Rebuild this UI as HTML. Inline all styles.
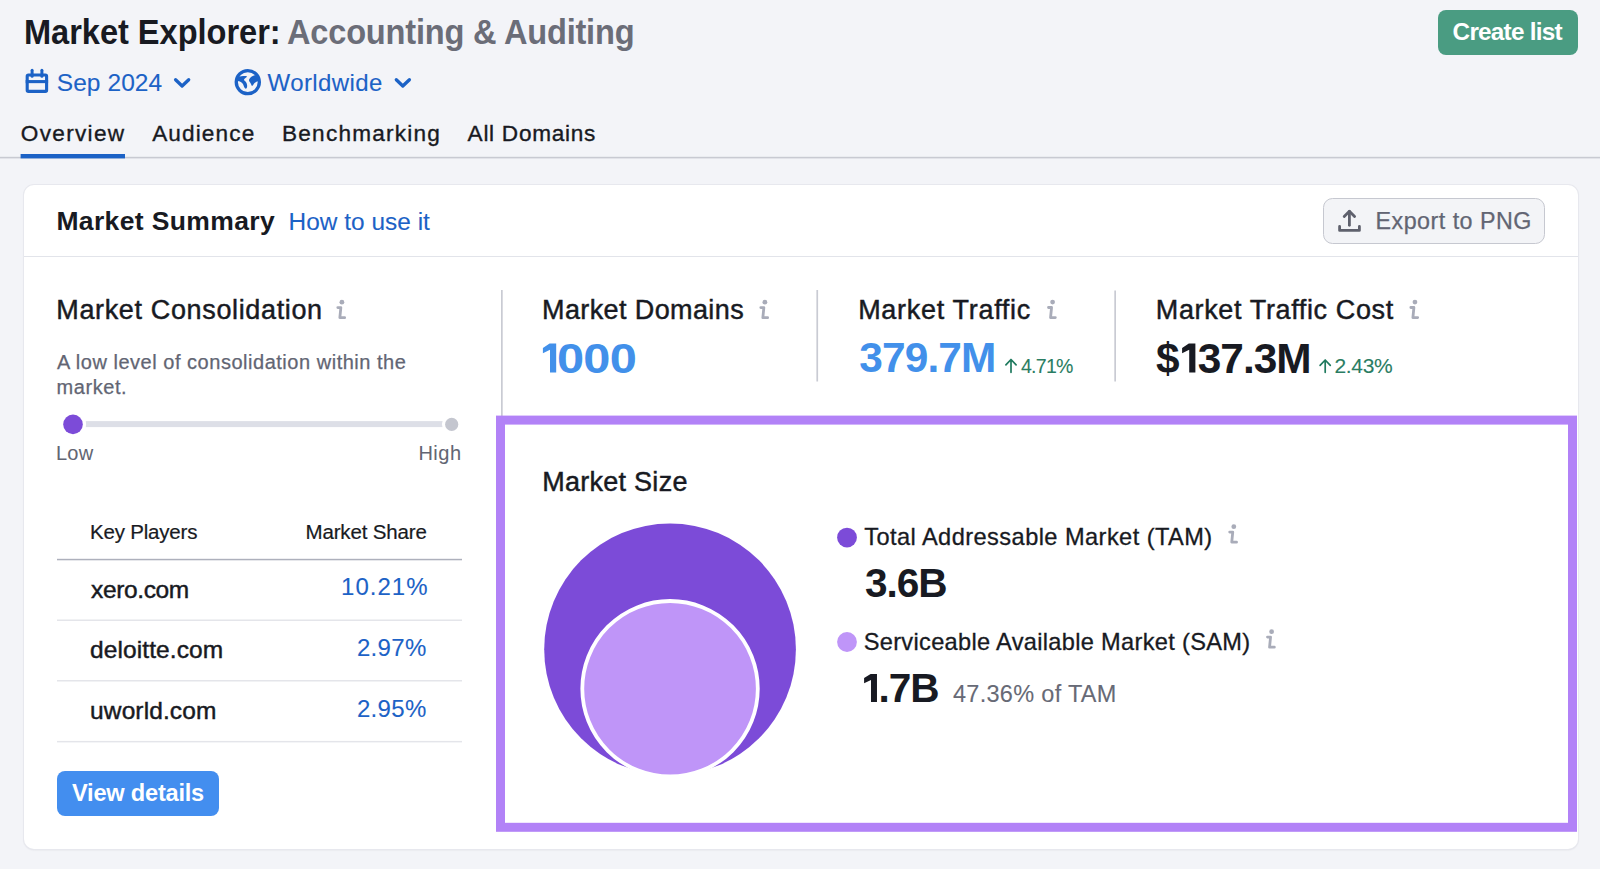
<!DOCTYPE html>
<html><head><meta charset="utf-8">
<style>
html,body{margin:0;padding:0;}
body{width:1600px;height:869px;background:#f3f4f8;position:relative;overflow:hidden;font-family:"Liberation Sans",sans-serif;}
.t{position:absolute;white-space:nowrap;line-height:1;font-family:"Liberation Sans",sans-serif;}
.a{position:absolute;}
svg{position:absolute;overflow:visible;}
</style></head><body>
<!-- top bar -->
<div class="a" style="left:1438px;top:9.5px;width:140px;height:45.5px;border-radius:8px;background:#4a9c82;"></div>
<svg style="left:0;top:0" width="1600" height="160" viewBox="0 0 1600 160">
  <!-- calendar -->
  <g fill="none" stroke="#1c62c6" stroke-width="3.1">
    <rect x="27.2" y="74.95" width="19.4" height="16.44" rx="1.2"/>
    <line x1="25.7" y1="81.6" x2="48.1" y2="81.6"/>
  </g>
  <g stroke="#1c62c6" stroke-width="3" stroke-linecap="round">
    <line x1="32.1" y1="70.3" x2="32.1" y2="76.3"/>
    <line x1="41.9" y1="70.3" x2="41.9" y2="76.3"/>
  </g>
  <!-- chevrons -->
  <path d="M175.6,79.7 L182.1,86 L188.7,79.7" fill="none" stroke="#1c62c6" stroke-width="3.3" stroke-linecap="round" stroke-linejoin="round"/>
  <path d="M396.3,79.7 L402.8,86 L409.4,79.7" fill="none" stroke="#1c62c6" stroke-width="3.3" stroke-linecap="round" stroke-linejoin="round"/>
  <!-- globe -->
  <g transform="translate(230,65) scale(0.04028)">
    <circle cx="442" cy="425" r="287" fill="none" stroke="#1c62c6" stroke-width="82"/>
    <path fill="#1c62c6" d="M175,300 C230,285 330,270 400,272 L425,292 C390,315 355,340 345,375 C380,405 420,440 425,500 C428,545 420,580 395,588 C360,585 345,530 325,480 C300,430 250,405 180,400 Z"/>
    <path fill="#1c62c6" d="M625,250 C565,270 505,305 480,345 C465,375 470,405 495,430 C520,460 530,500 545,522 C575,505 585,470 610,445 C640,420 670,405 705,395 L690,300 Z"/>
  </g>
  <!-- tabs line -->
  <rect x="0" y="156.8" width="1600" height="1.6" fill="#c8cad2"/>
  <rect x="20.6" y="154" width="104.4" height="4.4" fill="#1c62c6"/>
</svg>

<!-- card -->
<div class="a" style="left:24px;top:185px;width:1554px;height:664px;background:#fff;border-radius:10px;box-shadow:0 0 0 1px #e7e8ee,0 1px 2px rgba(30,30,50,0.12);"></div>
<div class="a" style="left:24px;top:255.5px;width:1554px;height:1.3px;background:#e2e4ea;"></div>
<!-- export button -->
<div class="a" style="left:1323.3px;top:197.9px;width:221.9px;height:45.8px;box-sizing:border-box;border:1.9px solid #c6c8d0;border-radius:9.5px;background:#f3f4f7;"></div>
<svg style="left:0;top:0" width="1600" height="869" viewBox="0 0 1600 869">
  <!-- upload icon -->
  <g fill="none" stroke="#5f616d" stroke-width="2.8" stroke-linecap="round" stroke-linejoin="round">
    <path d="M1349.4,211.5 V225.3"/>
    <path d="M1344.2,216.6 L1349.4,211.3 L1354.6,216.6"/>
    <path d="M1339.6,226.5 V230.4 H1359.4 V226.5"/>
  </g>
  <!-- dividers -->
  <rect x="501" y="290" width="1.7" height="126" fill="#c9cbd3"/>
  <rect x="816.4" y="290" width="1.7" height="91.5" fill="#c9cbd3"/>
  <rect x="1114.3" y="290.5" width="1.7" height="91" fill="#c9cbd3"/>
  <!-- slider -->
  <rect x="80" y="421.1" width="370" height="6" fill="#dddfe7"/>
  <circle cx="73" cy="424.1" r="13.1" fill="#fff"/>
  <circle cx="451.7" cy="424.1" r="9.8" fill="#fff"/>
  <circle cx="451.7" cy="424.4" r="6.6" fill="#c4c6cf"/>
  <circle cx="73" cy="424.4" r="9.8" fill="#7c4bd8"/>
  <!-- table lines -->
  <rect x="57" y="558.8" width="405" height="1.5" fill="#adb0bc"/>
  <rect x="57" y="619.5" width="405" height="1.5" fill="#e4e5ea"/>
  <rect x="57" y="680" width="405" height="1.5" fill="#e4e5ea"/>
  <rect x="57" y="740.9" width="405" height="1.5" fill="#e4e5ea"/>
  <!-- purple box -->
  <rect x="500.5" y="420.1" width="1072" height="407.2" fill="none" stroke="#b282f7" stroke-width="9"/>
  <!-- circles -->
  <circle cx="670.05" cy="649.35" r="125.85" fill="#7c4bd8"/>
  <circle cx="670.05" cy="688.75" r="87.75" fill="#bf95f8" stroke="#fff" stroke-width="3.8"/>
  <!-- legend dots -->
  <circle cx="847" cy="537.6" r="9.9" fill="#7c4bd8"/>
  <circle cx="847" cy="642" r="9.9" fill="#bf95f8"/>
  <!-- green arrows -->
  <g fill="none" stroke="#1f7a5e" stroke-width="1.7" stroke-linecap="round" stroke-linejoin="round">
    <path d="M1011,359.8 V372.3 M1005.9,364.9 L1011,359.5 L1016.1,364.9"/>
    <path d="M1325.2,360.3 V372.3 M1320.1,365.3 L1325.2,360 L1330.3,365.3"/>
  </g>
  <!-- info icons -->
  <defs>
    <g id="info">
      <circle cx="0" cy="0" r="2.4" fill="#a9acb9"/>
      <path d="M-4.1,5.4 H-1.05 L-2.05,15.5 H2.75" fill="none" stroke="#a9acb9" stroke-width="2.8" stroke-linecap="round" stroke-linejoin="round"/>
    </g>
  </defs>
  <use href="#info" x="341.9" y="302.2"/>
  <use href="#info" x="764.9" y="302.2"/>
  <use href="#info" x="1052.6" y="302.1"/>
  <use href="#info" x="1414.95" y="302.1"/>
  <use href="#info" x="1233.8" y="526.7"/>
  <use href="#info" x="1271.6" y="631.7"/>
</svg>
<!-- view details -->
<div class="a" style="left:57px;top:770.8px;width:161.8px;height:44.8px;border-radius:8px;background:#438eef;"></div>
<div class="t" id="t1" style="left:23.85px;top:14.60px;font-size:34.3px;font-weight:700;color:#181a22;letter-spacing:-0.032px;-webkit-text-stroke:0px #181a22;transform-origin:0 0;transform:scaleX(0.95)">Market Explorer:</div>
<div class="t" id="t2" style="left:287.05px;top:14.60px;font-size:34.3px;font-weight:700;color:#6b6d78;letter-spacing:-0.218px;-webkit-text-stroke:0px #6b6d78;transform-origin:0 0;transform:scaleX(0.95)">Accounting &amp; Auditing</div>
<div class="t" id="cl" style="left:1452.60px;top:19.80px;font-size:24.3px;font-weight:700;color:#fff;letter-spacing:-0.760px;-webkit-text-stroke:0px #fff;transform-origin:0 0;transform:scaleX(1.0)">Create list</div>
<div class="t" id="sep" style="left:56.75px;top:70.60px;font-size:24.5px;font-weight:400;color:#1c62c6;letter-spacing:0.071px;-webkit-text-stroke:0.1px #1c62c6;transform-origin:0 0;transform:scaleX(1.0)">Sep 2024</div>
<div class="t" id="ww" style="left:267.50px;top:70.60px;font-size:24px;font-weight:400;color:#1c62c6;letter-spacing:0.413px;-webkit-text-stroke:0.1px #1c62c6;transform-origin:0 0;transform:scaleX(1.0)">Worldwide</div>
<div class="t" id="tab1" style="left:20.75px;top:123.20px;font-size:22.6px;font-weight:400;color:#181a22;letter-spacing:1.321px;-webkit-text-stroke:0.35px #181a22;transform-origin:0 0;transform:scaleX(1.0)">Overview</div>
<div class="t" id="tab2" style="left:152.20px;top:123.20px;font-size:22.6px;font-weight:400;color:#181a22;letter-spacing:1.114px;-webkit-text-stroke:0.35px #181a22;transform-origin:0 0;transform:scaleX(1.0)">Audience</div>
<div class="t" id="tab3" style="left:282.00px;top:123.20px;font-size:22.6px;font-weight:400;color:#181a22;letter-spacing:1.227px;-webkit-text-stroke:0.35px #181a22;transform-origin:0 0;transform:scaleX(1.0)">Benchmarking</div>
<div class="t" id="tab4" style="left:467.60px;top:123.20px;font-size:22.6px;font-weight:400;color:#181a22;letter-spacing:0.720px;-webkit-text-stroke:0.35px #181a22;transform-origin:0 0;transform:scaleX(1.0)">All Domains</div>
<div class="t" id="ms" style="left:56.40px;top:207.50px;font-size:26.5px;font-weight:700;color:#181a22;letter-spacing:0.362px;-webkit-text-stroke:0px #181a22;transform-origin:0 0;transform:scaleX(1.0)">Market Summary</div>
<div class="t" id="how" style="left:288.50px;top:209.50px;font-size:24.4px;font-weight:400;color:#1c62c6;letter-spacing:0.033px;-webkit-text-stroke:0.1px #1c62c6;transform-origin:0 0;transform:scaleX(1.0)">How to use it</div>
<div class="t" id="exp" style="left:1375.50px;top:210.00px;font-size:23.3px;font-weight:400;color:#626573;letter-spacing:0.479px;-webkit-text-stroke:0.25px #626573;transform-origin:0 0;transform:scaleX(1.0)">Export to PNG</div>
<div class="t" id="mc" style="left:56.30px;top:296.70px;font-size:27px;font-weight:400;color:#181a22;letter-spacing:0.642px;-webkit-text-stroke:0.45px #181a22;transform-origin:0 0;transform:scaleX(1.0)">Market Consolidation</div>
<div class="t" id="d1" style="left:57.00px;top:351.60px;font-size:20px;font-weight:400;color:#626573;letter-spacing:0.521px;-webkit-text-stroke:0.25px #626573;transform-origin:0 0;transform:scaleX(1.0)">A low level of consolidation within the</div>
<div class="t" id="d2" style="left:56.50px;top:377.40px;font-size:20px;font-weight:400;color:#626573;letter-spacing:0.583px;-webkit-text-stroke:0.25px #626573;transform-origin:0 0;transform:scaleX(1.0)">market.</div>
<div class="t" id="low" style="left:55.90px;top:443.10px;font-size:20px;font-weight:400;color:#626573;letter-spacing:0.350px;-webkit-text-stroke:0.05px #626573;transform-origin:0 0;transform:scaleX(1.0)">Low</div>
<div class="t" id="high" style="left:418.40px;top:443.10px;font-size:20px;font-weight:400;color:#626573;letter-spacing:0.500px;-webkit-text-stroke:0.05px #626573;transform-origin:0 0;transform:scaleX(1.0)">High</div>
<div class="t" id="kp" style="left:90.00px;top:522.20px;font-size:20.5px;font-weight:400;color:#181a22;letter-spacing:-0.200px;-webkit-text-stroke:0.2px #181a22;transform-origin:0 0;transform:scaleX(1.0)">Key Players</div>
<div class="t" id="msh" style="left:305.50px;top:522.20px;font-size:20.5px;font-weight:400;color:#181a22;letter-spacing:-0.145px;-webkit-text-stroke:0.2px #181a22;transform-origin:0 0;transform:scaleX(1.0)">Market Share</div>
<div class="t" id="r1" style="left:91.10px;top:577.60px;font-size:24.5px;font-weight:400;color:#181a22;letter-spacing:-0.386px;-webkit-text-stroke:0.45px #181a22;transform-origin:0 0;transform:scaleX(1.0)">xero.com</div>
<div class="t" id="r2" style="left:90.10px;top:637.50px;font-size:24.5px;font-weight:400;color:#181a22;letter-spacing:0.082px;-webkit-text-stroke:0.45px #181a22;transform-origin:0 0;transform:scaleX(1.0)">deloitte.com</div>
<div class="t" id="r3" style="left:90.10px;top:699.00px;font-size:24.5px;font-weight:400;color:#181a22;letter-spacing:0.111px;-webkit-text-stroke:0.45px #181a22;transform-origin:0 0;transform:scaleX(1.0)">uworld.com</div>
<div class="t" id="p1" style="left:341.00px;top:575.40px;font-size:24px;font-weight:400;color:#1c62c6;letter-spacing:1.040px;-webkit-text-stroke:0.1px #1c62c6;transform-origin:0 0;transform:scaleX(1.0)">10.21%</div>
<div class="t" id="p2" style="left:356.90px;top:636.30px;font-size:24px;font-weight:400;color:#1c62c6;letter-spacing:0.350px;-webkit-text-stroke:0.1px #1c62c6;transform-origin:0 0;transform:scaleX(1.0)">2.97%</div>
<div class="t" id="p3" style="left:356.90px;top:697.10px;font-size:24px;font-weight:400;color:#1c62c6;letter-spacing:0.350px;-webkit-text-stroke:0.1px #1c62c6;transform-origin:0 0;transform:scaleX(1.0)">2.95%</div>
<div class="t" id="vd" style="left:72.00px;top:782.00px;font-size:23.6px;font-weight:700;color:#fff;letter-spacing:-0.218px;-webkit-text-stroke:0px #fff;transform-origin:0 0;transform:scaleX(1.0)">View details</div>
<div class="t" id="md" style="left:542.00px;top:296.90px;font-size:27px;font-weight:400;color:#181a22;letter-spacing:0.392px;-webkit-text-stroke:0.45px #181a22;transform-origin:0 0;transform:scaleX(1.0)">Market Domains</div>
<div class="t" id="v1" style="left:556.95px;top:337.50px;font-size:42.4px;font-weight:700;color:#4290ea;letter-spacing:-0.674px;-webkit-text-stroke:0px #4290ea;transform-origin:0 0;transform:scaleX(1.15)">000</div>
<div class="t" id="mt" style="left:858.15px;top:296.70px;font-size:27px;font-weight:400;color:#181a22;letter-spacing:0.696px;-webkit-text-stroke:0.45px #181a22;transform-origin:0 0;transform:scaleX(1.0)">Market Traffic</div>
<div class="t" id="v2" style="left:859.15px;top:337.20px;font-size:42.4px;font-weight:700;color:#4290ea;letter-spacing:-0.830px;-webkit-text-stroke:0px #4290ea;transform-origin:0 0;transform:scaleX(1.0)">379.7M</div>
<div class="t" id="g1" style="left:1021.10px;top:354.80px;font-size:21px;font-weight:400;color:#2a7d62;letter-spacing:-0.800px;-webkit-text-stroke:0.1px #2a7d62;transform-origin:0 0;transform:scaleX(0.93)">4.71%</div>
<div class="t" id="mtc" style="left:1155.80px;top:297.00px;font-size:27px;font-weight:400;color:#181a22;letter-spacing:0.633px;-webkit-text-stroke:0.45px #181a22;transform-origin:0 0;transform:scaleX(1.0)">Market Traffic Cost</div>
<div class="t" id="v3a" style="left:1156.10px;top:337.50px;font-size:42.4px;font-weight:700;color:#181a22;letter-spacing:0.000px;-webkit-text-stroke:0px #181a22;transform-origin:0 0;transform:scaleX(1.0)">$</div>
<div class="t" id="v3" style="left:1197.80px;top:337.50px;font-size:42.4px;font-weight:700;color:#181a22;letter-spacing:-1.000px;-webkit-text-stroke:0px #181a22;transform-origin:0 0;transform:scaleX(1.0)">37.3M</div>
<div class="t" id="g2" style="left:1334.40px;top:354.80px;font-size:21px;font-weight:400;color:#2a7d62;letter-spacing:-0.300px;-webkit-text-stroke:0.1px #2a7d62;transform-origin:0 0;transform:scaleX(1.0)">2.43%</div>
<div class="t" id="msz" style="left:542.20px;top:469.00px;font-size:27px;font-weight:400;color:#181a22;letter-spacing:0.270px;-webkit-text-stroke:0.45px #181a22;transform-origin:0 0;transform:scaleX(1.0)">Market Size</div>
<div class="t" id="tam" style="left:864.20px;top:526.10px;font-size:23.6px;font-weight:400;color:#181a22;letter-spacing:0.441px;-webkit-text-stroke:0.3px #181a22;transform-origin:0 0;transform:scaleX(1.0)">Total Addressable Market (TAM)</div>
<div class="t" id="tamv" style="left:864.90px;top:563.20px;font-size:40.6px;font-weight:700;color:#181a22;letter-spacing:-1.000px;-webkit-text-stroke:0px #181a22;transform-origin:0 0;transform:scaleX(1.0)">3.6B</div>
<div class="t" id="sam" style="left:863.70px;top:631.10px;font-size:23.6px;font-weight:400;color:#181a22;letter-spacing:0.318px;-webkit-text-stroke:0.3px #181a22;transform-origin:0 0;transform:scaleX(1.0)">Serviceable Available Market (SAM)</div>
<div class="t" id="samv" style="left:878.50px;top:667.90px;font-size:40.6px;font-weight:700;color:#181a22;letter-spacing:-1.000px;-webkit-text-stroke:0px #181a22;transform-origin:0 0;transform:scaleX(1.0)">.7B</div>
<div class="t" id="pct" style="left:952.90px;top:683.00px;font-size:23.5px;font-weight:400;color:#676a76;letter-spacing:0.308px;-webkit-text-stroke:0.1px #676a76;transform-origin:0 0;transform:scaleX(1.0)">47.36% of TAM</div>
<svg style="left:0;top:0" width="1600" height="869" viewBox="0 0 1600 869"><path d="M542.90,347.94 L549.60,343.60 L556.19,343.60 L556.19,372.50 L550.01,372.50 L550.01,349.81 L542.90,353.14 Z" fill="#4290ea"/><path d="M1182.10,347.94 L1188.80,343.60 L1195.39,343.60 L1195.39,372.50 L1189.21,372.50 L1189.21,349.81 L1182.10,353.14 Z" fill="#181a22"/><path d="M864.10,678.10 L870.60,673.90 L876.98,673.90 L876.98,701.90 L870.99,701.90 L870.99,679.92 L864.10,683.14 Z" fill="#181a22"/></svg>
</body></html>
